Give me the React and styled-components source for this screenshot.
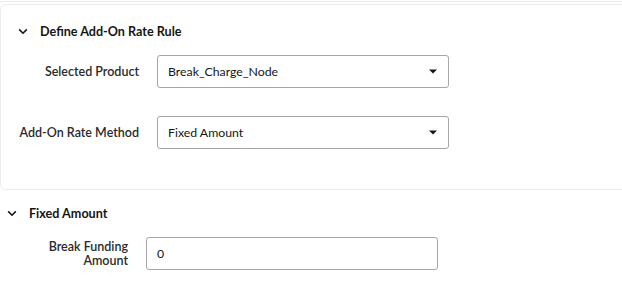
import styled, { createGlobalStyle } from "styled-components";

const GlobalStyle = createGlobalStyle`
  html, body {
    margin: 0;
    padding: 0;
    background: #ffffff;
    overflow: hidden;
  }
  body {
    font-family: Lato, "Noto Sans", sans-serif;
    color: #161513;
  }
`;

function Chevron() {
  return (
    <svg width="10" height="7" viewBox="0 0 10 7">
      <path d="M1.2 1.4 L5 5.2 L8.8 1.4" fill="none" stroke="#161513" strokeWidth="1.6" />
    </svg>
  );
}

function Caret() {
  return (
    <svg width="8" height="5" viewBox="0 0 8 5">
      <path d="M0 0.5 H8 L4 4.5 Z" fill="#161513" />
    </svg>
  );
}

function Select({ value }) {
  return (
    <Box>
      <span>{value}</span>
      <Caret />
    </Box>
  );
}

function App() {
  return (
    <>
      <GlobalStyle />
      <TopRule />
      <Card>
        <SectionHeader $indent={17}>
          <Chevron />
          <h3>Define Add-On Rate Rule</h3>
        </SectionHeader>
        <Form $label={138} $gap={28}>
          <Label>Selected Product</Label>
          <Select value="Break_Charge_Node" />
          <Label>Add-On Rate Method</Label>
          <Select value="Fixed Amount" />
        </Form>
      </Card>
      <Section>
        <SectionHeader $indent={7}>
          <Chevron />
          <h3>Fixed Amount</h3>
        </SectionHeader>
        <Form $label={128} $gap={20}>
          <Label $wrap>Break Funding Amount</Label>
          <Box>
            <span>0</span>
          </Box>
        </Form>
      </Section>
    </>
  );
}

const TopRule = styled.div`
  height: 1px;
  border-bottom: 1px solid #ececec;
`;

const Card = styled.div`
  margin-top: 2px;
  width: calc(100% + 12px);
  border: 1px solid #ededed;
  border-radius: 6px;
  padding: 16px 0 40px;
`;

const Section = styled.div`
  padding-top: 13px;
`;

const SectionHeader = styled.div`
  display: flex;
  align-items: center;
  height: 20px;
  padding-left: ${(p) => p.$indent}px;
  gap: 12px;

  svg {
    flex: none;
  }

  h3 {
    margin: 0;
    font-size: 12.6px;
    font-weight: 700;
    color: #161513;
  }
`;

const Form = styled.div`
  display: grid;
  grid-template-columns: ${(p) => p.$label}px 292px;
  column-gap: 18px;
  row-gap: ${(p) => p.$gap}px;
  align-items: center;
  margin-top: 14px;
`;

const Label = styled.label`
  justify-self: end;
  text-align: right;
  font-size: 12.5px;
  font-weight: 600;
  line-height: 14px;
  color: #2a2a2a;
  max-width: ${(p) => (p.$wrap ? "88px" : "none")};
`;

const Box = styled.div`
  box-sizing: border-box;
  height: 33px;
  display: flex;
  align-items: center;
  justify-content: space-between;
  padding: 0 11px 0 10px;
  border: 1px solid #a6a6a6;
  border-radius: 3px;
  background: #ffffff;
  font-size: 12.3px;
  color: #161513;
`;

export default App;
